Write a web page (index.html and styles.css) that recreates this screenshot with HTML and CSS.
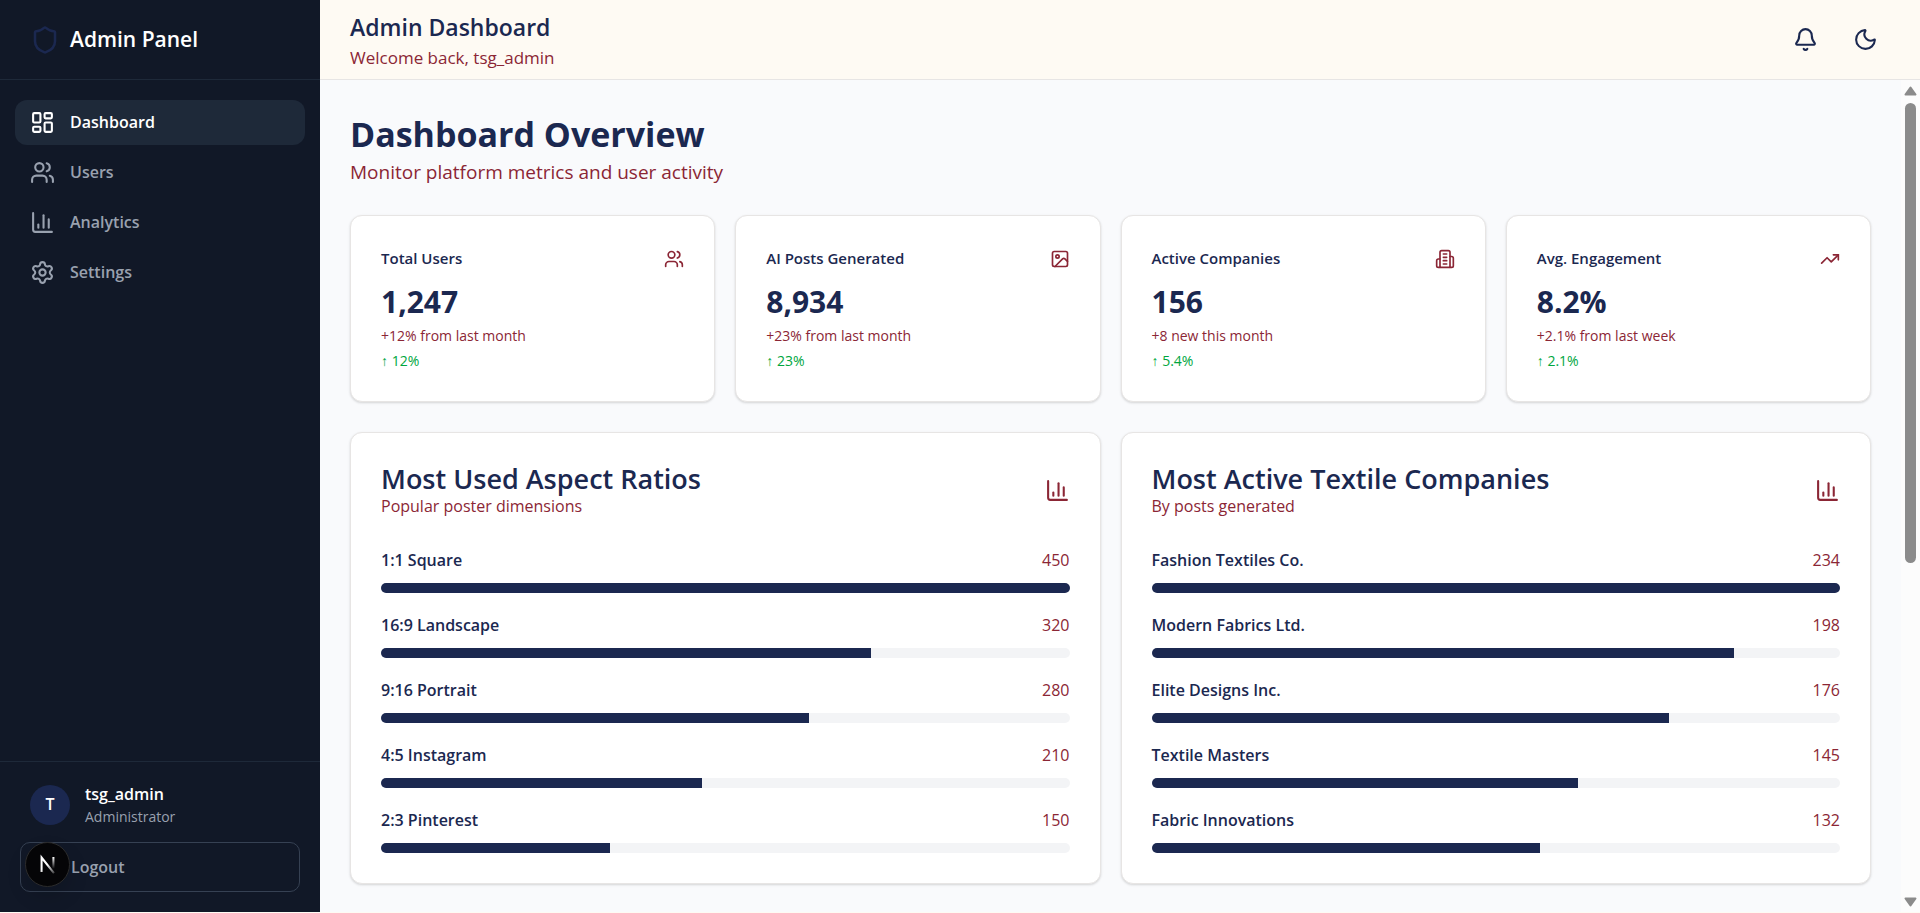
FILE: index.html
```html
<!DOCTYPE html>
<html lang="en">
<head>
<meta charset="utf-8">
<meta name="viewport" content="width=device-width, initial-scale=1">
<title>Admin Dashboard</title>
<link rel="stylesheet" href="styles.css">
</head>
<body>
<svg class="sprite" aria-hidden="true">
  <symbol id="i-shield" viewBox="0 0 24 24"><path d="M20 13c0 5-3.500 7.500-7.660 8.950a1 1 0 0 1-.67-.01C7.500 20.500 4 18 4 13V6a1 1 0 0 1 1-1c2 0 4.500-1.200 6.240-2.720a1.170 1.170 0 0 1 1.520 0C14.510 3.810 17 5 19 5a1 1 0 0 1 1 1z"/></symbol>
  <symbol id="i-dash" viewBox="0 0 24 24"><rect width="7" height="9" x="3" y="3" rx="1"/><rect width="7" height="5" x="14" y="3" rx="1"/><rect width="7" height="9" x="14" y="12" rx="1"/><rect width="7" height="5" x="3" y="16" rx="1"/></symbol>
  <symbol id="i-users" viewBox="0 0 24 24"><path d="M16 21v-2a4 4 0 0 0-4-4H6a4 4 0 0 0-4 4v2"/><path d="M16 3.128a4 4 0 0 1 0 7.744"/><path d="M22 21v-2a4 4 0 0 0-3-3.870"/><circle cx="9" cy="7" r="4"/></symbol>
  <symbol id="i-chart" viewBox="0 0 24 24"><path d="M3 3v16a2 2 0 0 0 2 2h16"/><path d="M18 17V9"/><path d="M13 17V5"/><path d="M8 17v-3"/></symbol>
  <symbol id="i-gear" viewBox="0 0 24 24"><path d="M9.671 4.136a2.340 2.340 0 0 1 4.659 0 2.340 2.340 0 0 0 3.319 1.915 2.340 2.340 0 0 1 2.330 4.033 2.340 2.340 0 0 0 0 3.831 2.340 2.340 0 0 1-2.330 4.033 2.340 2.340 0 0 0-3.319 1.915 2.340 2.340 0 0 1-4.659 0 2.340 2.340 0 0 0-3.320-1.915 2.340 2.340 0 0 1-2.330-4.033 2.340 2.340 0 0 0 0-3.831A2.340 2.340 0 0 1 6.350 6.051a2.340 2.340 0 0 0 3.319-1.915"/><circle cx="12" cy="12" r="3"/></symbol>
  <symbol id="i-bell" viewBox="0 0 24 24"><path d="M10.268 21a2 2 0 0 0 3.464 0"/><path d="M3.262 15.326A1 1 0 0 0 4 17h16a1 1 0 0 0 .74-1.673C19.410 13.956 18 12.499 18 8A6 6 0 0 0 6 8c0 4.499-1.411 5.956-2.738 7.326"/></symbol>
  <symbol id="i-moon" viewBox="0 0 24 24"><path d="M20.985 12.486a9 9 0 1 1-9.473-9.472c.405-.022.617.46.402.803a6 6 0 0 0 8.268 8.268c.344-.215.825-.004.803.401"/></symbol>
  <symbol id="i-image" viewBox="0 0 24 24"><rect width="18" height="18" x="3" y="3" rx="2"/><circle cx="9" cy="9" r="2"/><path d="m21 15-3.086-3.086a2 2 0 0 0-2.828 0L6 21"/></symbol>
  <symbol id="i-building" viewBox="0 0 24 24"><path d="M6 22V4a2 2 0 0 1 2-2h8a2 2 0 0 1 2 2v18Z"/><path d="M6 12H4a2 2 0 0 0-2 2v6a2 2 0 0 0 2 2h2"/><path d="M18 9h2a2 2 0 0 1 2 2v9a2 2 0 0 1-2 2h-2"/><path d="M10 6h4"/><path d="M10 10h4"/><path d="M10 14h4"/><path d="M10 18h4"/></symbol>
  <symbol id="i-trend" viewBox="0 0 24 24"><path d="M16 7h6v6"/><path d="m22 7-8.500 8.500-5-5L2 17"/></symbol>
</svg>

<div class="shell">
  <aside class="sidebar">
    <div class="brand">
      <svg class="icon icon-lg brand-icon" aria-hidden="true"><use href="#i-shield"/></svg>
      <span class="brand-name">Admin Panel</span>
    </div>
    <nav class="nav">
      <a class="nav-link active" href="#dashboard" aria-current="page"><svg class="icon" aria-hidden="true"><use href="#i-dash"/></svg>Dashboard</a>
      <a class="nav-link" href="#users"><svg class="icon" aria-hidden="true"><use href="#i-users"/></svg>Users</a>
      <a class="nav-link" href="#analytics"><svg class="icon" aria-hidden="true"><use href="#i-chart"/></svg>Analytics</a>
      <a class="nav-link" href="#settings"><svg class="icon" aria-hidden="true"><use href="#i-gear"/></svg>Settings</a>
    </nav>
    <div class="account">
      <div class="profile">
        <span class="avatar">T</span>
        <div>
          <p class="profile-name">tsg_admin</p>
          <p class="profile-role">Administrator</p>
        </div>
      </div>
      <button class="logout" type="button">Logout</button>
      <button class="dev-badge" type="button" aria-label="Open developer tools">
        <svg class="dev-logo" viewBox="0 0 40 40" fill="none" aria-hidden="true">
          <defs>
            <linearGradient id="fade-diag" gradientUnits="userSpaceOnUse" x1="20" y1="20" x2="27" y2="29"><stop stop-color="#fff"/><stop offset="1" stop-color="#fff" stop-opacity="0.15"/></linearGradient>
            <linearGradient id="fade-side" gradientUnits="userSpaceOnUse" x1="25" y1="13" x2="25" y2="24"><stop stop-color="#fff"/><stop offset="1" stop-color="#fff" stop-opacity="0"/></linearGradient>
          </defs>
          <path d="M14.500 27V13.500L26 28" stroke="url(#fade-diag)" stroke-width="1.900"/>
          <path d="M25.500 13V24" stroke="url(#fade-side)" stroke-width="1.900"/>
        </svg>
      </button>
    </div>
  </aside>

  <div class="page">
    <header class="topbar">
      <div>
        <h2 class="topbar-title">Admin Dashboard</h2>
        <p class="topbar-sub">Welcome back, tsg_admin</p>
      </div>
      <div class="topbar-actions">
        <button class="icon-button" type="button" aria-label="Notifications"><svg class="icon" aria-hidden="true"><use href="#i-bell"/></svg></button>
        <button class="icon-button" type="button" aria-label="Toggle dark mode"><svg class="icon" aria-hidden="true"><use href="#i-moon"/></svg></button>
      </div>
    </header>

    <div class="viewport">
      <main class="content">
        <div class="intro">
          <h1 class="intro-title">Dashboard Overview</h1>
          <p class="intro-sub">Monitor platform metrics and user activity</p>
        </div>

        <section class="stats" aria-label="Key metrics">
          <article class="card stat">
            <div class="stat-head"><h3 class="stat-title">Total Users</h3><svg class="icon icon-sm" aria-hidden="true"><use href="#i-users"/></svg></div>
            <p class="stat-value">1,247</p>
            <p class="stat-note">+12% from last month</p>
            <p class="stat-note stat-up">↑ 12%</p>
          </article>
          <article class="card stat">
            <div class="stat-head"><h3 class="stat-title">AI Posts Generated</h3><svg class="icon icon-sm" aria-hidden="true"><use href="#i-image"/></svg></div>
            <p class="stat-value">8,934</p>
            <p class="stat-note">+23% from last month</p>
            <p class="stat-note stat-up">↑ 23%</p>
          </article>
          <article class="card stat">
            <div class="stat-head"><h3 class="stat-title">Active Companies</h3><svg class="icon icon-sm" aria-hidden="true"><use href="#i-building"/></svg></div>
            <p class="stat-value">156</p>
            <p class="stat-note">+8 new this month</p>
            <p class="stat-note stat-up">↑ 5.4%</p>
          </article>
          <article class="card stat">
            <div class="stat-head"><h3 class="stat-title">Avg. Engagement</h3><svg class="icon icon-sm" aria-hidden="true"><use href="#i-trend"/></svg></div>
            <p class="stat-value">8.2%</p>
            <p class="stat-note">+2.1% from last week</p>
            <p class="stat-note stat-up">↑ 2.1%</p>
          </article>
        </section>

        <section class="charts" aria-label="Rankings">
          <article class="card">
            <div class="chart-head">
              <div><h3 class="chart-title">Most Used Aspect Ratios</h3><p class="chart-sub">Popular poster dimensions</p></div>
              <svg class="icon" aria-hidden="true"><use href="#i-chart"/></svg>
            </div>
            <ul class="bars">
              <li><div class="bar-row"><span class="bar-label">1:1 Square</span><span>450</span></div><div class="track"><div class="fill" style="width:100%"></div></div></li>
              <li><div class="bar-row"><span class="bar-label">16:9 Landscape</span><span>320</span></div><div class="track"><div class="fill" style="width:71.110%"></div></div></li>
              <li><div class="bar-row"><span class="bar-label">9:16 Portrait</span><span>280</span></div><div class="track"><div class="fill" style="width:62.220%"></div></div></li>
              <li><div class="bar-row"><span class="bar-label">4:5 Instagram</span><span>210</span></div><div class="track"><div class="fill" style="width:46.670%"></div></div></li>
              <li><div class="bar-row"><span class="bar-label">2:3 Pinterest</span><span>150</span></div><div class="track"><div class="fill" style="width:33.330%"></div></div></li>
            </ul>
          </article>
          <article class="card">
            <div class="chart-head">
              <div><h3 class="chart-title">Most Active Textile Companies</h3><p class="chart-sub">By posts generated</p></div>
              <svg class="icon" aria-hidden="true"><use href="#i-chart"/></svg>
            </div>
            <ul class="bars">
              <li><div class="bar-row"><span class="bar-label">Fashion Textiles Co.</span><span>234</span></div><div class="track"><div class="fill" style="width:100%"></div></div></li>
              <li><div class="bar-row"><span class="bar-label">Modern Fabrics Ltd.</span><span>198</span></div><div class="track"><div class="fill" style="width:84.620%"></div></div></li>
              <li><div class="bar-row"><span class="bar-label">Elite Designs Inc.</span><span>176</span></div><div class="track"><div class="fill" style="width:75.210%"></div></div></li>
              <li><div class="bar-row"><span class="bar-label">Textile Masters</span><span>145</span></div><div class="track"><div class="fill" style="width:61.970%"></div></div></li>
              <li><div class="bar-row"><span class="bar-label">Fabric Innovations</span><span>132</span></div><div class="track"><div class="fill" style="width:56.410%"></div></div></li>
            </ul>
          </article>
        </section>
      </main>
      <div class="scrollbar" aria-hidden="true">
        <svg class="scroll-arrow" viewBox="0 0 13 10"><path d="M6.500 1.500 11.500 8.500h-10z"/></svg>
        <div class="scroll-track"><div class="scroll-thumb"></div></div>
        <svg class="scroll-arrow" viewBox="0 0 13 10"><path d="M6.500 8.500 11.500 1.500h-10z"/></svg>
      </div>
    </div>
  </div>
</div>
</body>
</html>
```
FILE: styles.css
```css
:root {
  --navy: #1b2850;
  --wine: #8b2635;
  --line: #e7e5e4;
  --cream: #fefaf3;
  --night: #111827;
  --muted: #99a1af;
}

* { box-sizing: border-box; }

body {
  margin: 0;
  background: var(--cream);
  color: var(--navy);
  font: 16px/25px "Segoe UI", "Open Sans", "Noto Sans", sans-serif;
}

h1, h2, h3, p, ul { margin: 0; padding: 0; }
ul { list-style: none; }
button { font: inherit; color: inherit; background: none; border: 0; padding: 0; cursor: pointer; }

.sprite { display: none; }

.icon {
  width: 25px;
  height: 25px;
  flex: none;
  fill: none;
  stroke: currentColor;
  stroke-width: 2;
  stroke-linecap: round;
  stroke-linejoin: round;
}
.icon-sm { width: 20px; height: 20px; }
.icon-lg { width: 30px; height: 30px; }

.shell { display: flex; height: calc(100vh - 1px); }

/* Sidebar */
.sidebar {
  display: flex;
  flex-direction: column;
  flex: 0 0 320px;
  background: var(--night);
  color: var(--muted);
}
.brand {
  display: flex;
  align-items: center;
  gap: 10px;
  height: 80px;
  padding: 0 30px;
  border-bottom: 1px solid #1e2939;
}
.brand-icon { color: var(--navy); }
.brand-name { color: #fff; font-size: 21px; font-weight: 600; }

.nav {
  display: flex;
  flex: 1;
  flex-direction: column;
  gap: 5px;
  padding: 20px 15px;
}
.nav-link {
  display: flex;
  align-items: center;
  gap: 15px;
  padding: 10px 15px;
  border-radius: 12px;
  color: inherit;
  font-weight: 600;
  text-decoration: none;
}
.nav-link.active { background: #1e2939; color: #fff; }

.account {
  position: relative;
  padding: 20px;
  border-top: 1px solid #1e2939;
}
.profile {
  display: flex;
  align-items: center;
  gap: 15px;
  padding: 0 10px;
  margin-bottom: 15px;
}
.avatar {
  display: grid;
  place-items: center;
  width: 40px;
  height: 40px;
  border-radius: 50%;
  background: var(--navy);
  color: #fff;
  font-weight: 600;
}
.profile-name { color: #fff; font-weight: 600; }
.profile-role { font-size: 14px; line-height: 20px; }
.logout {
  display: block;
  width: 100%;
  height: 50px;
  padding-left: 50px;
  border: 1px solid #364153;
  border-radius: 10px;
  font-weight: 600;
  text-align: left;
}
.dev-badge {
  position: absolute;
  left: 25px;
  bottom: 25px;
  width: 45px;
  height: 45px;
  border: 1px solid #2b2b2b;
  border-radius: 50%;
  background: #050507;
  box-shadow: 0 10px 20px rgba(0, 0, 0, 0.14);
}
.dev-logo { display: block; width: 100%; height: 100%; }

/* Top bar */
.page { display: flex; flex: 1; flex-direction: column; min-width: 0; }
.topbar {
  display: flex;
  align-items: center;
  justify-content: space-between;
  flex: none;
  height: 80px;
  padding: 0 30px;
  border-bottom: 1px solid var(--line);
  background: var(--cream);
}
.topbar-title { font-size: 23px; font-weight: 600; line-height: 35px; }
.topbar-sub { color: var(--wine); font-size: 17px; }
.topbar-actions { display: flex; gap: 10px; }
.icon-button { display: grid; place-items: center; width: 50px; height: 50px; }

/* Scrolling content */
.viewport { display: flex; flex: 1; min-height: 0; background: #f9fafc; }
.content { flex: 1; min-width: 0; padding: 30px; overflow: hidden; }
.intro { margin-bottom: 29px; }
.intro-title { font-size: 34px; font-weight: 700; line-height: 48px; }
.intro-sub { color: var(--wine); font-size: 19px; line-height: 28px; }

.card {
  padding: 30px;
  border: 1px solid var(--line);
  border-radius: 12px;
  background: #fff;
  box-shadow: 0 1px 3px rgba(0, 0, 0, 0.1), 0 1px 2px rgba(0, 0, 0, 0.06);
}
.card .icon { color: var(--wine); }

.stats { display: grid; grid-template-columns: repeat(4, 1fr); gap: 20px; margin-bottom: 30px; }
.stat { padding-bottom: 28px; }
.stat-head { display: flex; align-items: center; justify-content: space-between; margin-bottom: 10px; }
.stat-title { font-size: 15px; font-weight: 600; line-height: 25px; }
.stat-value { font-size: 30px; font-weight: 700; line-height: 42px; }
.stat-note { color: var(--wine); font-size: 14px; line-height: 25px; }
.stat-up { color: #00a63e; }

.charts { display: grid; grid-template-columns: repeat(2, 1fr); gap: 20px; }
.chart-head { display: flex; align-items: center; justify-content: space-between; margin-bottom: 30px; }
.chart-title { font-size: 27px; font-weight: 600; line-height: 32px; }
.chart-sub { color: var(--wine); line-height: 23px; }
.bars { display: grid; gap: 20px; }
.bar-row { display: flex; justify-content: space-between; margin-bottom: 10px; color: var(--wine); }
.bar-label { color: var(--navy); font-weight: 600; }
.track { height: 10px; border-radius: 5px; background: #f3f4f6; overflow: hidden; }
.fill { height: 100%; background: var(--navy); }

.scrollbar {
  display: flex;
  flex: 0 0 19px;
  flex-direction: column;
  align-items: center;
  justify-content: space-between;
  padding: 5px 0 4px;
  background: #fcfcfc;
}
.scroll-arrow { width: 13px; height: 12px; fill: #8b8b8b; stroke: #8b8b8b; stroke-width: 2; stroke-linejoin: round; }
.scroll-track { flex: 1; width: 11px; margin: 6px 0; }
.scroll-thumb { height: 58.4%; border-radius: 6px; background: #8b8b8b; }
```
